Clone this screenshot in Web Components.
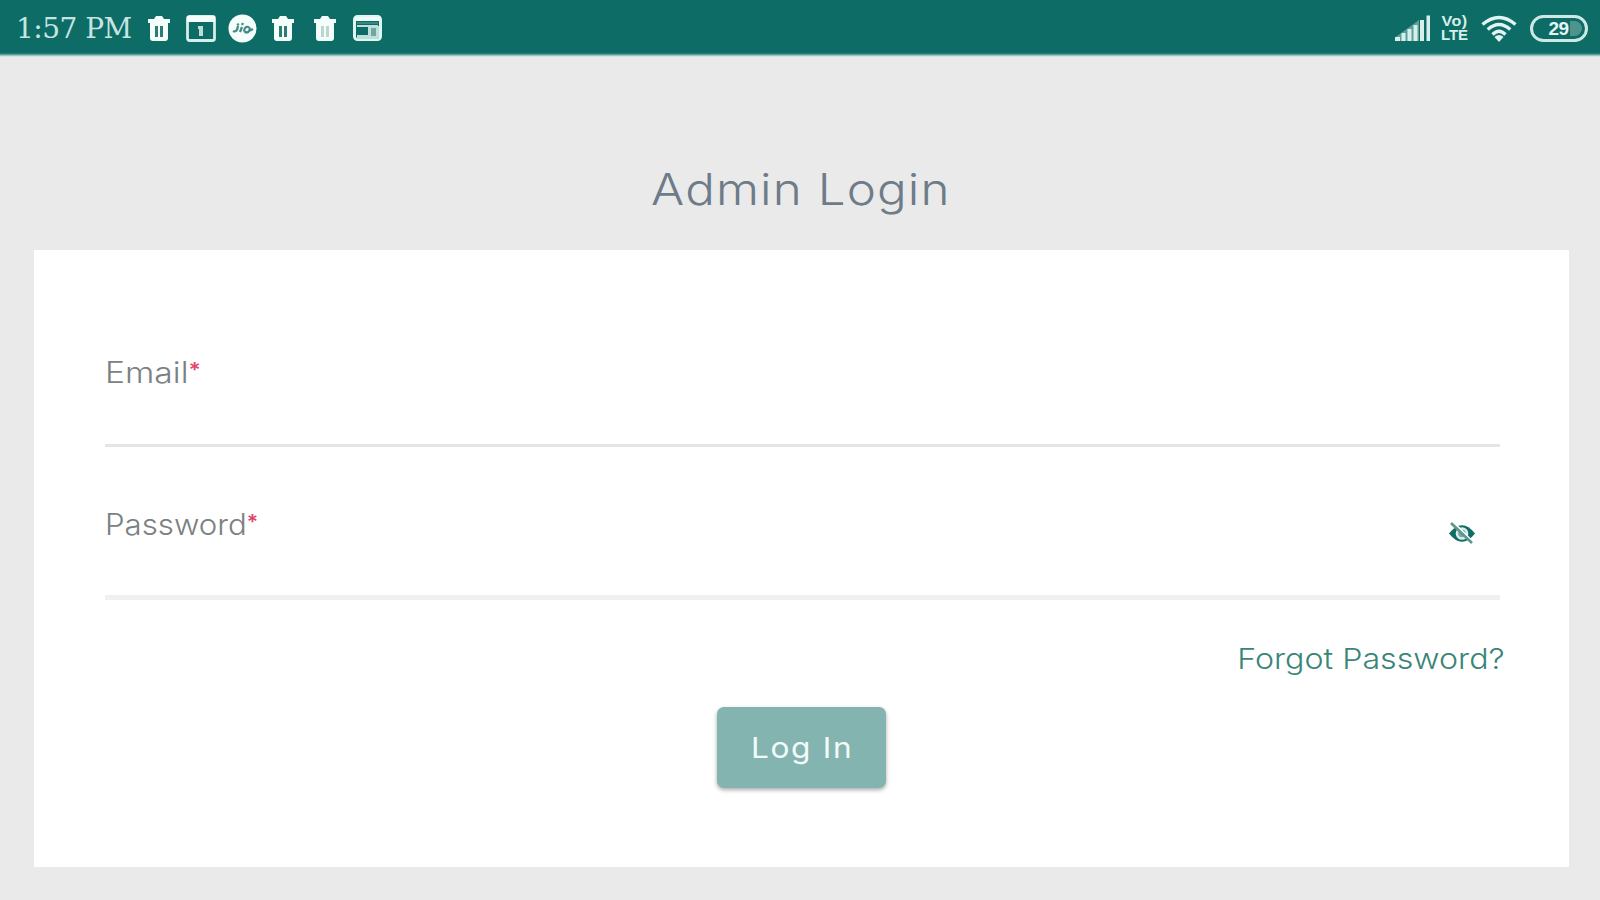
<!DOCTYPE html>
<html lang="en"><head><meta charset="utf-8"><title>Admin Login</title>
<style>html,body{margin:0;height:100%;overflow:hidden;background:#eaeaea;font-family:Inter,"Open Sans",sans-serif}</style></head>
<body><admin-login-page></admin-login-page>
<script>
const define=(name,html)=>customElements.define(name,class extends HTMLElement{
  connectedCallback(){ if(this.shadowRoot) return;
    this.attachShadow({mode:'open'}).innerHTML=html; }
});
define('trash-icon',`<style>:host{display:block;width:24px;height:27px}svg{display:block}:host([solid]) .gap{fill:#b9d6d2}</style>
<svg width="24" height="27" viewBox="0 0 24 27"><path d="M1 4h6l2-3h6l2 3h6v4H1z" fill="#f4fffc"/><path d="M3 7h18v16q0 3-3 3H6q-3 0-3-3z" fill="#f4fffc"/><path class="gap" d="M8 11h3v11H8zM13 11h3v11h-3z" fill="#2d7d75"/></svg>`);
define('calendar-icon',`<style>:host{display:block;width:30px;height:27px}svg{display:block}</style>
<svg width="30" height="27" viewBox="0 0 30 27"><rect x="1.5" y="1.5" width="27" height="24" rx="2" fill="none" stroke="#d3efeb" stroke-width="2.8"/><path d="M1 1h28v6H1z" fill="#f4fffc"/><path d="M12 11h5v10h-4v-7h-1z" fill="#b9dcd8"/></svg>`);
define('jio-icon',`<style>:host{display:block;width:29px;height:29px}svg{display:block}</style>
<svg width="29" height="29" viewBox="0 0 29 29"><circle cx="14.5" cy="14.5" r="14" fill="#f4fffc"/><path d="M5 17q4 2 5-5M12 18l2-5M16 17q1-5 4-4t1 4-5 0M21 17l4-2M9 11l2-1M14 11l1-2" fill="none" stroke="#448d86" stroke-width="2.3"/></svg>`);
define('news-icon',`<style>:host{display:block;width:29px;height:26px}svg{display:block}</style>
<svg width="29" height="26" viewBox="0 0 29 26"><rect x="1.5" y="1.5" width="26" height="23" rx="3" fill="none" stroke="#dff5f1" stroke-width="3"/><path d="M2 2h25v4H2z" fill="#effdfa"/><path d="M4 10h21v2H4zM15 11h11v13H15zM4 20h14v4H4z" fill="#c0dfdb"/><path d="M4 7h21v2H4z" fill="#3b867f"/><path d="M18 13h5v8h-5z" fill="#6da9a2"/></svg>`);
define('signal-icon',`<style>:host{display:block;width:36px;height:26px}svg{display:block}</style>
<svg width="36" height="26" viewBox="0 0 36 26"><path d="M0 26v-3.500L24 5v21z" fill="#5d9f98"/><path d="M0 22h5v4H0zM6.5 18h4v8h-4zM12.500 14h4v12h-4zM18.500 10h4v16h-4zM25 5h4v21h-4zM31.5 0.5h3.500v25.500h-3.500z" fill="#d7eeeb"/></svg>`);
define('volte-label',`<style>:host{display:block;width:29px;text-align:center;font:bold 15px/14px "Liberation Sans",sans-serif;color:#d7eeeb}div{white-space:nowrap}.v{font-size:14px;line-height:13px;letter-spacing:.4px;transform:scaleX(1.15)}</style><div class="v">Vo)</div><div>LTE</div>`);
define('wifi-icon',`<style>:host{display:block;width:36px;height:27px}svg{display:block}</style>
<svg width="36" height="27" viewBox="0 0 36 27"><g fill="none" stroke="#e0f5f2" stroke-width="3.4"><path d="M1.500 9.500Q18-4.500 34.500 9.500"/><path d="M6.700 14.500Q18 4.500 29.300 14.500"/><path d="M11.500 19.500Q18 13 24.500 19.500"/></g><path d="M13.500 22q4.500-4 9 0L18 27z" fill="#e0f5f2"/></svg>`);
define('battery-pill',`<style>:host{display:flex;box-sizing:border-box;width:58px;height:27px;border:3px solid #cde8e5;border-radius:14px;padding:3px}
div{flex:1;border-radius:8px;background:linear-gradient(90deg,#0d6c66 0 74%,#4d948f 74%);text-align:center;font:bold 19px/16px "Liberation Sans",sans-serif;color:#e4f6f3;padding-right:1px;letter-spacing:-.5px}</style><div>29</div>`);
define('status-bar',`<style>:host{display:flex;box-sizing:border-box;height:57px;padding:0 12px 3px 16px;background:linear-gradient(#0d6c66 0 53px,#5d9b97 54.500px,#bdd5d3 56px,#eaeeed 57px);align-items:center}
time{font:28px/54px "DejaVu Serif",serif;color:#c6e5e2;letter-spacing:-.5px;width:130.500px;white-space:nowrap;padding-top:3px}
.l,.r{display:flex;align-items:center;height:54px;padding-top:2px;box-sizing:border-box}.l{flex:1}
trash-icon{margin-right:15px}calendar-icon{margin-right:12px}jio-icon{margin-right:14.500px}trash-icon[solid]{margin-right:15.500px}.t2{margin-right:18px}
signal-icon{margin-right:9px}volte-label{margin-right:12px}wifi-icon{margin-right:13px}</style>
<time>1:57 PM</time><div class="l"><trash-icon></trash-icon><calendar-icon></calendar-icon><jio-icon></jio-icon><trash-icon class="t2"></trash-icon><trash-icon solid></trash-icon><news-icon></news-icon></div>
<div class="r"><signal-icon></signal-icon><volte-label></volte-label><wifi-icon></wifi-icon><battery-pill></battery-pill></div>`);
define('form-field',`<style>:host{display:flex;flex-direction:column;box-sizing:border-box;width:1395px;border-bottom:var(--line,3px solid #e5e5e5)}
.row{display:flex;justify-content:space-between}label{font-size:29.500px;line-height:40px;font-weight:300;color:#7b8183;white-space:nowrap;transform:scaleX(var(--wide,1.14));transform-origin:0 50%}i{font-style:normal;color:#e3426d;font-weight:600;font-size:20px;vertical-align:6px;line-height:1}</style>
<div class="row"><label><slot></slot><i>*</i></label><slot name="end"></slot></div>`);
define('eye-off-icon',`<style>:host{display:block;width:28px;height:24px;margin:17px 24px 0 0}svg{display:block}</style>
<svg width="28" height="24" viewBox="0 0 28 24"><path d="M1 12.500Q14-4 27 12.500Q14 29 1 12.500z" fill="#116c64"/><circle cx="14" cy="12.500" r="6.300" fill="#dcece9"/><circle cx="14" cy="12.500" r="3.800" fill="#75aaa3"/><path d="M5 1l20 20" stroke="#fff" stroke-width="2"/><path d="M3 2l21 20" stroke="#5b968f" stroke-width="2.600"/></svg>`);
define('login-button',`<style>:host{display:block}button{display:block;box-sizing:border-box;width:169px;height:81px;border:0;border-radius:7px;background:#84b4b0;color:#f2fbfa;font:400 28.500px/82px Inter,sans-serif;letter-spacing:1.500px;padding:0 0 0 1px;box-shadow:0 2px 4px #0005}span{display:inline-block;transform:scaleX(1.11)}</style><button><span><slot></slot></span></button>`);
define('login-card',`<style>:host{display:flex;flex-direction:column;align-items:center;box-sizing:border-box;width:1535px;height:617px;margin:0 0 0 34px;background:#fff;padding:102px 0 0 2px}
.f1{height:95px}.f2{height:96px;margin-top:57px;--line:5px solid #f0f0f0;--wide:1.058}
.forgot{align-self:flex-end;margin:39px 64px 0 0;font-size:28.500px;line-height:40px;color:#3a8578;font-weight:350;white-space:nowrap;transform:scaleX(1.13);transform-origin:100% 50%}
login-button{margin:28px 2px 0 0}</style>
<form-field class="f1">Email</form-field><form-field class="f2">Password<eye-off-icon slot="end"></eye-off-icon></form-field>
<div class="forgot">Forgot Password?</div><login-button>Log In</login-button>`);
define('admin-login-page',`<style>:host{display:flex;flex-direction:column;height:900px;width:1600px;background:#eaeaea}
h1{margin:102px 0 31px;align-self:center;font-size:44px;line-height:60px;font-weight:300;color:#6e7b88;letter-spacing:1px;transform:scaleX(1.12);padding-left:2px}</style>
<status-bar></status-bar><h1>Admin Login</h1><login-card></login-card>`);
</script></body></html>
